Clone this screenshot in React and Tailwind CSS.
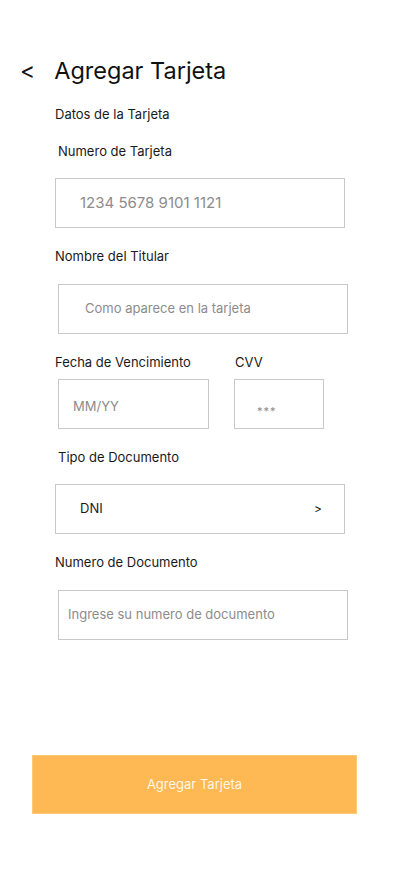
import React from "react";

function Label({ children, className = "" }) {
  return (
    <div className={`text-[13px] leading-4 text-[#1a1a1a] ${className}`}>{children}</div>
  );
}

function Box({ children, className = "" }) {
  return (
    <div className={`h-[50px] border border-[#c8c8c8] bg-white flex items-center ${className}`}>
      {children}
    </div>
  );
}

export default function App() {
  return (
    <div
      className="w-[400px] h-[893px] bg-white flex flex-col"
      style={{ fontFamily: "Inter, 'Noto Sans', sans-serif" }}
    >
      <div className="mt-[56px] flex items-center h-[30px]">
        <span className="ml-[20px] text-[23px] leading-7 text-[#111]">&lt;</span>
        <h1 className="ml-[19px] text-[23.5px] leading-7 font-normal text-[#111]">Agregar Tarjeta</h1>
      </div>

      <Label className="ml-[55px] mt-[20px]">Datos de la Tarjeta</Label>
      <Label className="ml-[58px] mt-[21px]">Numero de Tarjeta</Label>
      <Box className="ml-[55px] mt-[19px] w-[290px]">
        <span className="ml-[24px] text-[15px] text-[#8c8c8c]">1234 5678 9101 1121</span>
      </Box>

      <Label className="ml-[55px] mt-[20px]">Nombre del Titular</Label>
      <Box className="ml-[58px] mt-[20px] w-[290px]">
        <span className="ml-[26px] text-[13px] text-[#8c8c8c]">Como aparece en la tarjeta</span>
      </Box>

      <div className="flex mt-[20px]">
        <Label className="ml-[55px] w-[180px]">Fecha de Vencimiento</Label>
        <Label>CVV</Label>
      </div>
      <div className="flex mt-[9px]">
        <Box className="ml-[58px] w-[151px]">
          <span className="ml-[14px] text-[13px] text-[#8c8c8c] translate-y-[3px]">MM/YY</span>
        </Box>
        <Box className="ml-[25px] w-[90px]">
          <span className="ml-[22px] text-[11px] text-[#8c8c8c] translate-y-[7px] tracking-[1px]">***</span>
        </Box>
      </div>

      <Label className="ml-[58px] mt-[20px]">Tipo de Documento</Label>
      <Box className="ml-[55px] mt-[19px] w-[290px] justify-between">
        <span className="ml-[24px] text-[13px] text-[#1a1a1a]">DNI</span>
        <span className="mr-[22px] text-[12px] text-[#1a1a1a]">&gt;</span>
      </Box>

      <Label className="ml-[55px] mt-[20px]">Numero de Documento</Label>
      <Box className="ml-[58px] mt-[20px] w-[290px]">
        <span className="ml-[9px] text-[13px] text-[#8c8c8c]">Ingrese su numero de documento</span>
      </Box>

      <button className="ml-[32px] mt-[115px] w-[325px] h-[59px] bg-[#feb854] border border-[#fcc97a] flex items-center justify-center text-[13px] text-[#fff6e8]">
        Agregar Tarjeta
      </button>
    </div>
  );
}
